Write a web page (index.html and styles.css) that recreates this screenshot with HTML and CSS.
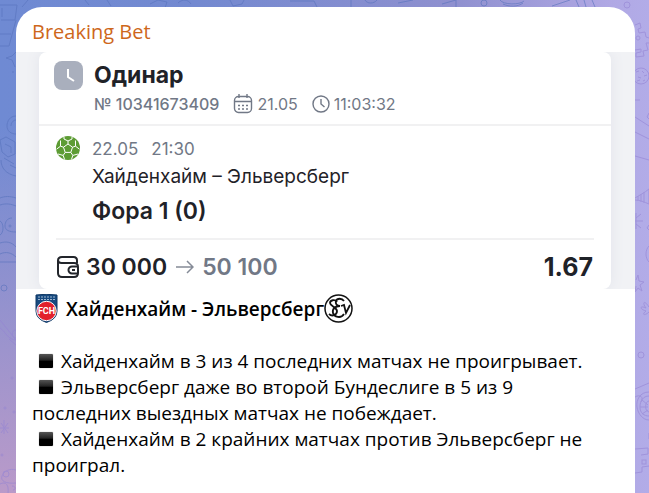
FILE: index.html
```html
<!DOCTYPE html>
<html lang="ru">
<head>
    <meta charset="UTF-8">
    <meta name="viewport" content="width=device-width, initial-scale=1.0">
    <title>Breaking Bet</title>
    <link rel="stylesheet" href="styles.css">
</head>
<body>

    <svg class="wallpaper" viewBox="0 0 649 493" preserveAspectRatio="none" aria-hidden="true">
        <!-- left edge -->
        <g class="doodle-blue">
            <path d="M0 5h17l-2 15H1M2 8v9M16 20l-7 26H0M11 34H0M16 52l-4 4-6 2 6 2 3 7M13 71v2M16 116c-6 0-9 5-9 10s4 8 9 8M16 120c-3 0-5 3-5 6"/>
            <path d="M0 140l6-3 9 5v12l-7 3-6-5zM5 144l6 3v6M1 160c0 8 5 14 15 16M4 158l10 6M16 168l-6-3"/>
            <path d="M0 198c5-2 10-2 16 0M0 205c6-2 11-1 16 1M12 218c-5 0-7 4-7 8s4 6 11 6M0 221c4 2 4 12 0 14M0 243c6-2 12-1 16 4M0 254c6-3 12-1 16 3M0 262h16"/>
            <circle cx="4" cy="288" r="3"/>
            <circle cx="10" cy="226" r="1"/>
        </g>
        <g class="doodle-violet">
            <path d="M0 320l16 20M0 328c5 3 8 12 16 12M16 330c-5 0-5 8 0 8M9 339l7 6M4 420v14M-1 428h10M1 423l7 10M8 423l-7 10M16 470c-6-2-12 1-14 6s4 8 14 7M0 484c6-3 9 1 8 9M12 486c4 0 4 4 1 4"/>
            <circle cx="6" cy="474" r="3"/>
            <circle cx="5" cy="408" r="1"/>
            <circle cx="14" cy="412" r="1"/>
            <circle cx="2" cy="455" r="1"/>
            <circle cx="12" cy="378" r="1"/>
        </g>
        <!-- strip above the message -->
        <g class="doodle-blue">
            <path d="M28 0l-6 7M85 0l4 5M107 0l4 6M150 4l8-4 9 2-2 6M178 3c4-4 10-4 13 1M230 0l3 6 9-2 2-4M290 1h24l3 6M351 0v7M365 0c2 4 9 4 12 0M398 3l15-3"/>
            <path d="M442 4l14-4v7M500 0c3 5 20 5 24 1M503 4c6 3 15 3 20-1M552 6l18-6M576 0l3 7M584 0l2 7M592 0l3 7"/>
            <circle cx="484" cy="3" r="3"/>
        </g>
        <!-- right edge -->
        <g class="doodle-violet">
            <circle cx="627" cy="5" r="3"/>
            <circle cx="638" cy="38" r="2"/>
            <path d="M635 25l5-2 1 5-3 1 1 4 6-1 1 5 3 1M635 50l6-1v3l-5 1v4l8-1-1-5 5-1-2-7h3"/>
            <circle cx="641" cy="76" r="8"/>
            <path d="M636 72l3-1M642 71l2 2M638 77l3 1M644 76l3-1M637 81l3-1M643 81l2-1M635 100h5M635 117l14 9M635 132l14 7M635 156l14 4M649 113l-2 4 2 2M635 198c5-3 9-5 14-9v15c-5-2-9-4-14-4M638 196v5M641 194v8M644 192v11M636 213v16M635 221h8M636 218l5-4M636 224l5 4M649 225l-2 3 2 2M649 246c-4 4-4 12 0 16"/>
            <path d="M636 280l2-5 1 6 5 1-4 3 2 6-4-3-3 4 1-6M649 307c-5-8-7-4-3 1-6-3-7 1 0 3-5 4-1 5 3 1"/>
            <circle cx="641" cy="355" r="3"/>
            <path d="M635 389l14-6M635 397c5-3 9 0 6 5M649 392c-9 0-13 8-12 15s6 13 12 13M649 396c-6 0-9 5-9 11s4 9 9 9M649 401c-4 0-5 10 0 11M640 407h8M642 400l6 5M642 414l6-4M635 449l13-1v6l-7 1M635 473l7-1v-5l7-1M649 433v6"/>
            <rect x="642" y="460" width="4" height="4"/>
        </g>
    </svg>

    <main class="message">
        <h1 class="channel"><a href="#">Breaking Bet</a></h1>

        <section class="photo">
            <div class="slip">
                <div class="slip-head">
                    <svg class="badge" viewBox="0 0 29 29" aria-hidden="true">
                        <rect width="29" height="29" rx="8" fill="#a9afbd"/>
                        <path d="M14 8v8l6 4" fill="none" stroke="#fff" stroke-width="2"/>
                    </svg>
                    <div class="slip-info">
                        <h2>Одинар</h2>
                        <div class="meta">
                            <span class="number">№ 10341673409</span>
                            <span class="meta-item">
                                <svg width="20" height="20" viewBox="0 0 20 20" aria-hidden="true">
                                    <g fill="none" stroke="#717886" stroke-width="1.4">
                                        <rect x="1.5" y="2.5" width="17" height="16" rx="4"/>
                                        <path d="M2 7.5h16M6 0v4M14 0v4"/>
                                        <path d="M5 11.5h10M5 15h10" stroke-dasharray="2 2"/>
                                    </g>
                                </svg>
                                21.05
                            </span>
                            <span class="meta-item">
                                <svg width="18" height="18" viewBox="0 0 18 18" aria-hidden="true">
                                    <g fill="none" stroke="#717886" stroke-width="1.4">
                                        <circle cx="9" cy="9" r="8"/>
                                        <path d="M9 4v5l3.5 3"/>
                                    </g>
                                </svg>
                                11:03:32
                            </span>
                        </div>
                    </div>
                </div>

                <div class="event">
                    <svg class="ball" viewBox="0 0 24 24" aria-hidden="true">
                        <circle cx="12" cy="12" r="12" fill="#5d9c34"/>
                        <g fill="none" stroke="#fff" stroke-width="1">
                            <path d="M12 8l4.5 3.2-1.7 5.2H9.2l-1.7-5.2z"/>
                            <path d="M12 8V5M16.5 11.200l3-1M14.8 16.4l2 3M9.2 16.4l-2 3M7.5 11.200l-3-1"/>
                            <path d="M8 1v2l4 2 4-2V1M19.5 4.5v5.700l4 3M22 18l-5.200 1.400-1.300 4M8.5 23.400l-1.300-4L2 18M.5 13.200l4-3V4.500"/>
                        </g>
                    </svg>
                    <div class="event-info">
                        <p class="when"><span>22.05</span><span>21:30</span></p>
                        <p class="teams">Хайденхайм – Эльверсберг</p>
                        <p class="pick">Фора 1 (0)</p>
                    </div>
                </div>

                <div class="money">
                    <svg width="24" height="24" viewBox="0 0 24 24" aria-hidden="true">
                        <g fill="none" stroke="#22252b" stroke-width="2">
                            <path d="M21 8V5.5Q21 2 17.5 2H6Q2 2 2 5.500V18q0 4 4 4h12q4 0 4-4v-6q0-4-4-4H5.500Q2 8 2 5"/>
                            <path d="M22 11.5h-6a3.500 3.500 0 0 0 0 7h6M16 15h3"/>
                        </g>
                    </svg>
                    <span class="stake">30 000</span>
                    <svg width="18" height="16" viewBox="0 0 18 16" aria-hidden="true">
                        <path d="M0 8h17M11 2l6 6-6 6" fill="none" stroke="#858b97" stroke-width="1.5"/>
                    </svg>
                    <span class="payout">50 100</span>
                    <span class="odds">1.67</span>
                </div>
            </div>
        </section>

        <div class="text">
            <h2 class="match">
                <svg class="fch" viewBox="0 0 23 29" aria-hidden="true">
                    <path d="M1 1q10-1.500 21 0v16q0 8-10.500 11.500Q1 25 1 17z" fill="#174a80" stroke="#0f3764"/>
                    <path d="M3 3h17M3 5.5h17" stroke="#9fb6cf" stroke-dasharray="2 1"/>
                    <circle cx="11.5" cy="17" r="9.7" fill="#e2202c" stroke="#fff"/>
                    <text x="11.5" y="20" text-anchor="middle">FCH</text>
                </svg>
                <span>Хайденхайм - Эльверсберг</span>
                <svg class="sve" viewBox="0 0 29 29" aria-hidden="true">
                    <circle cx="14.5" cy="14.5" r="13.5" fill="#fff" stroke="#111" stroke-width="1.5"/>
                    <g fill="none" stroke="#111" stroke-width="1.8">
                        <path d="M13 8c-2-3-7-2-7 1s7 4 7 8-5 6-8 3"/>
                        <path d="M20 7c-2-3-7-3-8 0s1 5 4 5c-5 0-8 3-7 7s8 6 11 1"/>
                        <path d="M17 12l3-1 2 8 4-8"/>
                    </g>
                </svg>
            </h2>

            <p><i class="square"></i>Хайденхайм в 3 из 4 последних матчах не проигрывает.</p>
            <p><i class="square"></i>Эльверсберг даже во второй Бундеслиге в 5 из 9 последних выездных матчах не побеждает.</p>
            <p><i class="square"></i>Хайденхайм в 2 крайних матчах против Эльверсберг не проиграл.</p>
        </div>
    </main>

</body>
</html>
```

FILE: styles.css
```css
* {
    box-sizing: border-box;
}
body {
    position: relative;
    display: flex;
    min-height: 100vh;
    margin: 0;
    padding: 7px 14px 0 16px;
    font-family: "Open Sans", "Noto Sans", sans-serif;
    color: #000;
    background:
        linear-gradient(to bottom, transparent 25%, rgba(194, 156, 200, 0.9)) left / 16px 100% no-repeat,
        linear-gradient(to right, #6f8ad3, #7389d0 30%, #8f90cf 70%, #b0a8e4 94%, #b2ace8);
}
h1, h2, p {
    margin: 0;
}
.wallpaper {
    position: absolute;
    top: 0;
    left: 0;
    width: 100%;
    height: 100%;
    fill: none;
}
.doodle-blue {
    stroke: #5873bd;
    opacity: 0.6;
}
.doodle-violet {
    stroke: #9585d4;
    opacity: 0.6;
}
.message {
    position: relative;
    flex: 1;
    min-width: 0;
    background: #fff;
    border-radius: 26px 26px 0 0;
}
.channel {
    padding: 11px 16px 6px;
    font-size: 20px;
    font-weight: 500;
    line-height: 28px;
}
.channel a {
    color: #ce671b;
    text-decoration: none;
}

/* bet slip */
.photo {
    padding: 0 24px 0 23px;
    background: #f1f2f5;
    font-family: Inter, "Liberation Sans", sans-serif;
    color: #1f2228;
    overflow: hidden;
}
.slip {
    background: #fff;
    border-radius: 8px;
    box-shadow: 0 0 14px #e2e4eb;
}
.slip-head {
    display: flex;
    gap: 11px;
    padding: 9px 15px;
    border-bottom: 2px solid #f1f1f2;
}
.badge {
    width: 29px;
    height: 29px;
}
.slip-info h2 {
    font-size: 23px;
    font-weight: 700;
    line-height: 28px;
}
.meta {
    display: flex;
    align-items: center;
    gap: 14px;
    margin-top: 4px;
    font-size: 16px;
    line-height: 22px;
    color: #717886;
}
.number {
    font-weight: 500;
}
.meta-item {
    display: flex;
    align-items: center;
    gap: 4px;
}
.event {
    display: flex;
    gap: 12px;
    margin: 0 17px;
    padding: 10px 0;
    border-bottom: 2px solid #f1f1f2;
}
.ball {
    width: 24px;
    height: 24px;
}
.when {
    display: flex;
    gap: 13px;
    font-size: 17px;
    line-height: 26px;
    color: #717886;
}
.teams {
    font-size: 19px;
    line-height: 30px;
}
.pick {
    margin-top: 2px;
    font-size: 23px;
    font-weight: 600;
    line-height: 34px;
}
.money {
    display: flex;
    align-items: center;
    gap: 6px;
    padding: 10px 18px 5px 17px;
    font-size: 23px;
    font-weight: 600;
    line-height: 34px;
}
.stake {
    margin-right: 3px;
}
.payout {
    margin-left: 2px;
    color: #717886;
}
.odds {
    margin-left: auto;
    font-size: 25px;
    font-weight: 700;
}

/* message text */
.text {
    padding: 5px 24px 7px 16px;
    font-size: 19px;
    line-height: 26px;
}
.match {
    display: flex;
    align-items: center;
    margin-bottom: 25px;
    font-size: 19px;
    font-weight: 600;
    line-height: 26px;
}
.fch {
    width: 23px;
    height: 29px;
    margin: 0 8px 0 3px;
}
.fch text {
    font: bold 9px Roboto, sans-serif;
    fill: #fff;
}
.sve {
    width: 29px;
    height: 29px;
}
.square {
    display: inline-block;
    width: 14px;
    height: 14px;
    margin: 0 8px 0 7px;
    border-radius: 1px;
    background: linear-gradient(#555, #222 45%, #000 50%);
    box-shadow: 0 0 1px #777;
}
```
